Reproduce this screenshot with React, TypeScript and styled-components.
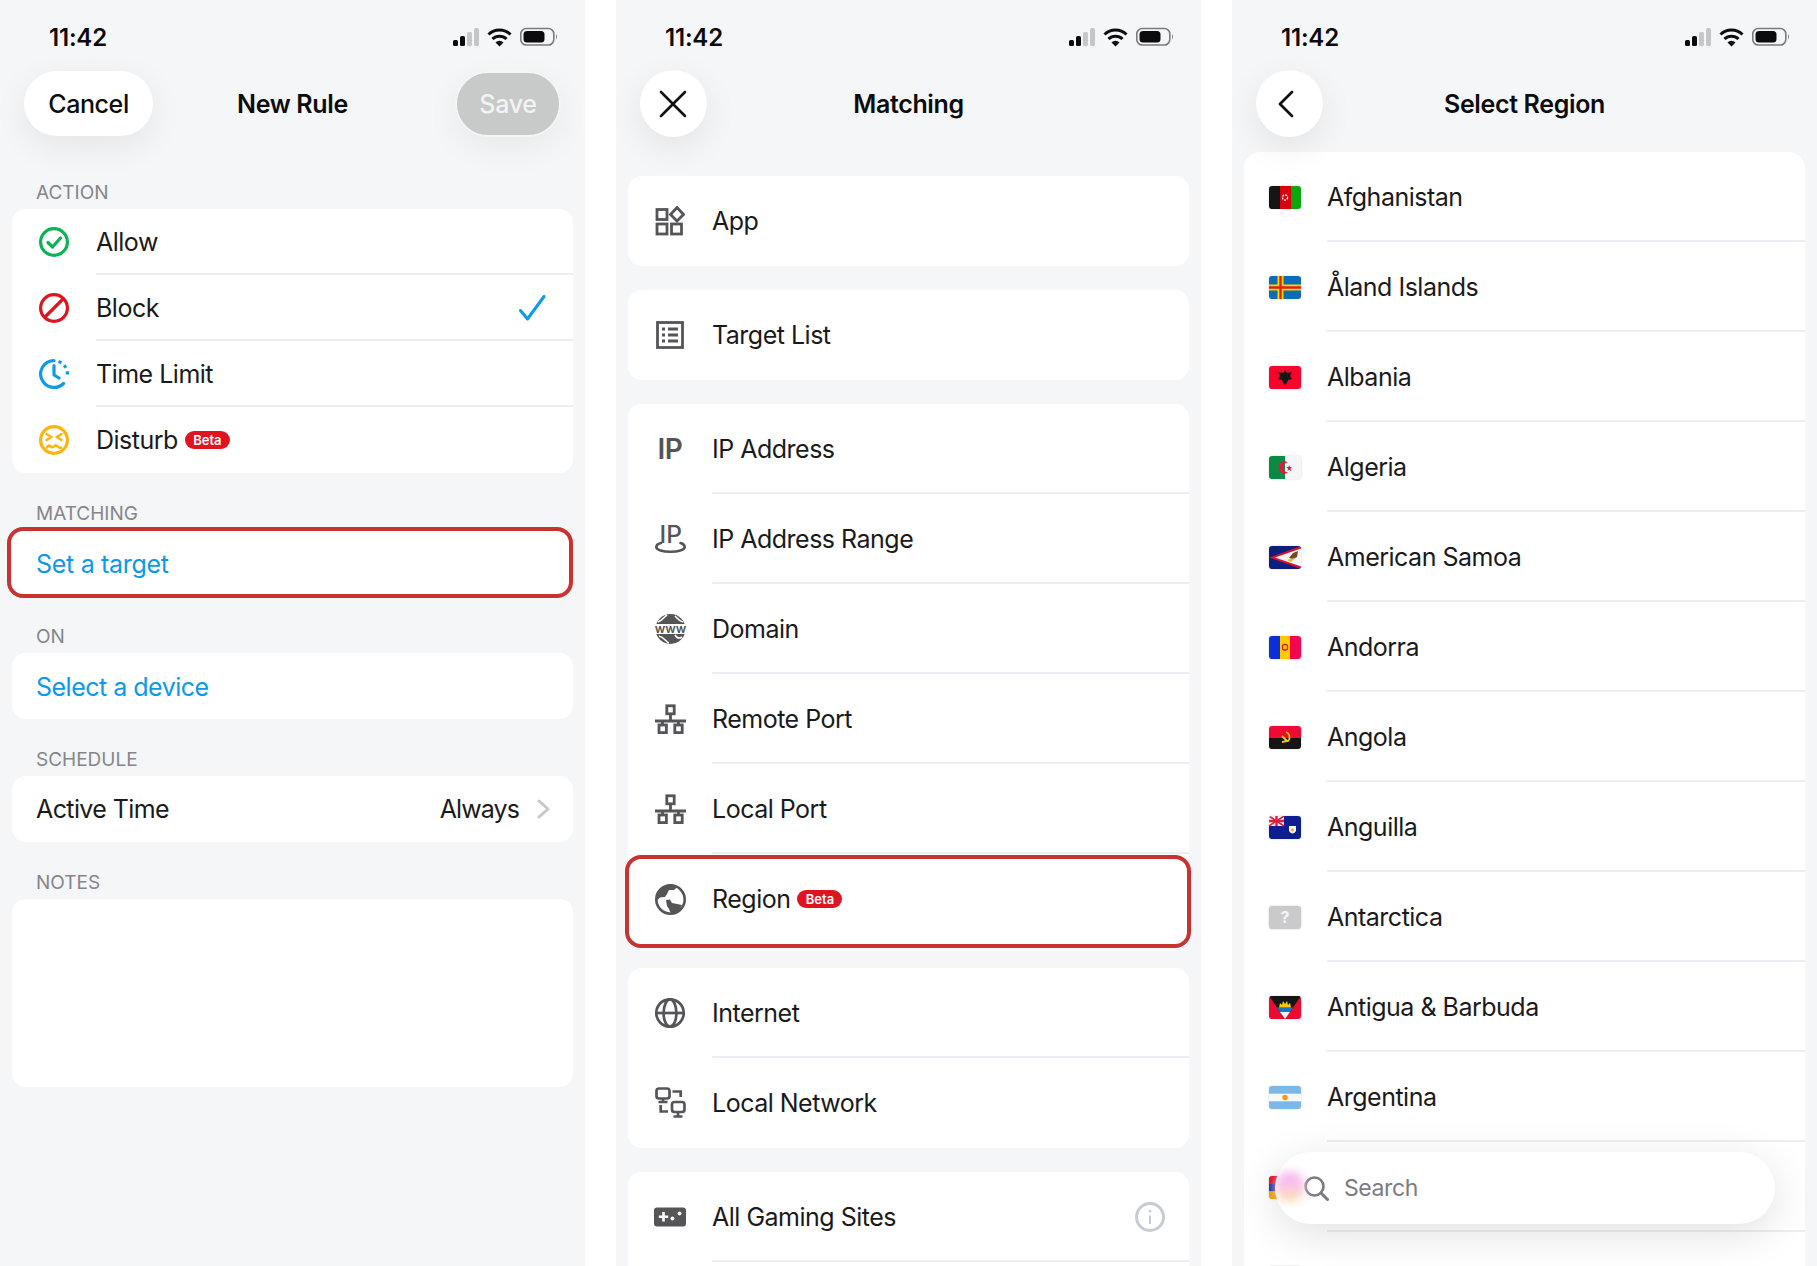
import React from "react";
import styled, { createGlobalStyle } from "styled-components";

const GlobalStyle = createGlobalStyle`
  html, body {
    margin: 0;
    padding: 0;
    background: #ffffff;
  }
  * {
    box-sizing: border-box;
  }
`;

const Page = styled.div`
  display: flex;
  gap: 31px;
  width: 1817px;
  height: 1266px;
  overflow: hidden;
  font-family: Inter, "Liberation Sans", sans-serif;
  color: #1a1a1c;
`;

const Panel = styled.section`
  position: relative;
  flex: 0 0 585px;
  height: 1266px;
  overflow: hidden;
  background: #f5f6f8;
`;

const StatusBar = styled.div`
  display: flex;
  justify-content: space-between;
  align-items: flex-start;
  height: 71px;
  padding: 23px 26px 0 49px;
`;

const Time = styled.span`
  font-size: 24px;
  line-height: 30px;
  font-weight: 600;
  letter-spacing: -0.2px;
  color: #0c0c0e;
`;

const StatusSvg = styled.svg`
  display: block;
  margin-top: 4px;
`;

const NavBar = styled.header`
  position: relative;
  z-index: 1;
  display: grid;
  grid-template-columns: 1fr auto 1fr;
  align-items: start;
  height: 81px;
  padding: 0 24px;
`;

const NavTitle = styled.h1`
  margin: 0;
  font-size: 25px;
  line-height: 66px;
  font-weight: 600;
  letter-spacing: -0.35px;
  color: #0c0c0e;
`;

const CancelButton = styled.button`
  justify-self: start;
  width: 129px;
  height: 65px;
  padding: 0;
  border: none;
  border-radius: 33px;
  background: #ffffff;
  box-shadow: 0 10px 34px rgba(0, 0, 0, 0.07);
  font: 500 25px Inter, sans-serif;
  letter-spacing: -0.4px;
  color: #0c0c0e;
`;

const SaveButton = styled.button`
  justify-self: end;
  width: 106px;
  height: 66px;
  padding: 0;
  border: 2px solid #f4f5f5;
  border-radius: 33px;
  background: #c8c9c9;
  box-shadow: 0 10px 34px rgba(0, 0, 0, 0.06);
  font: 500 25px Inter, sans-serif;
  letter-spacing: -0.3px;
  color: #f2f3f3;
`;

const CircleButton = styled.button<{ $nudge: number }>`
  display: flex;
  align-items: center;
  justify-content: center;
  justify-self: start;
  width: 67px;
  height: 67px;
  margin-top: -1px;
  padding: 0 ${(p) => p.$nudge}px 0 0;
  border: none;
  border-radius: 50%;
  background: #ffffff;
  box-shadow: 0 10px 34px rgba(0, 0, 0, 0.08);
`;

const Section = styled.div`
  padding: 0 12px;
`;

const CardStack = styled.div`
  display: flex;
  flex-direction: column;
  gap: 24px;
  padding: 24px 12px 0;
`;

const SectionLabel = styled.div`
  height: 29px;
  margin-top: 28px;
  padding-left: 24px;
  font-size: 19px;
  line-height: 26px;
  font-weight: 400;
  color: #85858a;
`;

const Card = styled.div<{ $height?: number; $open?: boolean }>`
  position: relative;
  height: ${(p) => (p.$height ? `${p.$height}px` : "auto")};
  border-radius: ${(p) => (p.$open ? "16px 16px 0 0" : "14px")};
  background: #ffffff;
`;

const ListCard = styled(Card)`
  margin: 0 12px;
  overflow: hidden;
`;

const Row = styled.div<{ $height: number }>`
  position: relative;
  display: flex;
  align-items: center;
  height: ${(p) => p.$height}px;
`;

const IconSlot = styled.span<{ $width: number }>`
  display: flex;
  align-items: center;
  justify-content: center;
  flex: 0 0 ${(p) => p.$width}px;
`;

const FlagSlot = styled(IconSlot)`
  padding-right: 1px;
`;

const RowBody = styled.div<{ $last?: boolean }>`
  display: flex;
  flex: 1;
  align-items: center;
  justify-content: space-between;
  align-self: stretch;
  padding: ${(p) => (p.$last ? "0 24px 0 0" : "2px 24px 0 0")};
  border-bottom: ${(p) => (p.$last ? "none" : "2px solid #eceef4")};
`;

const Label = styled.span`
  display: flex;
  align-items: center;
  gap: 7px;
  font-size: 25px;
  font-weight: 400;
  letter-spacing: -0.5px;
`;

const LinkLabel = styled.span<{ $spacing: number }>`
  padding: 1px 0 0 24px;
  font-size: 25px;
  letter-spacing: ${(p) => p.$spacing}px;
  color: #0a9ae9;
`;

const PlainRow = styled(Row)`
  justify-content: space-between;
  padding: 0 23px 0 24px;
  font-size: 25px;
  letter-spacing: -0.6px;
`;

const ValueGroup = styled.span`
  display: flex;
  align-items: center;
  gap: 18px;
  letter-spacing: -0.9px;
`;

const BetaBadge = styled.span`
  display: inline-block;
  width: 45px;
  height: 18px;
  border-radius: 9px;
  background: #de141f;
  color: #ffffff;
  font-size: 13px;
  line-height: 18px;
  font-weight: 600;
  letter-spacing: 0;
  text-align: center;
`;

const TargetHighlight = styled.div`
  position: absolute;
  inset: -3px 0 -2px -5px;
  border: 4px solid #c8322f;
  border-radius: 16px;
  pointer-events: none;
`;

const RegionHighlight = styled.div`
  position: absolute;
  inset: 1px -2px -4px -3px;
  border: 4px solid #c8322f;
  border-radius: 16px;
  pointer-events: none;
`;

const IpGlyph = styled.span`
  font-size: 28px;
  line-height: 30px;
  font-weight: 600;
  letter-spacing: -0.5px;
  color: #555558;
`;

const SearchPill = styled.div`
  position: absolute;
  left: 43px;
  right: 42px;
  bottom: 42px;
  z-index: 2;
  display: flex;
  align-items: center;
  gap: 15px;
  height: 72px;
  padding-left: 29px;
  border-radius: 36px;
  background: #ffffff;
  box-shadow: 0 10px 44px rgba(0, 0, 0, 0.12);

  &::before {
    content: "";
    position: absolute;
    left: 0;
    top: 20px;
    width: 30px;
    height: 30px;
    border-radius: 50%;
    background: linear-gradient(#f5a8ea 0%, #f8c6ef 45%, #fde09a 100%);
    filter: blur(5px);
  }
`;

const SearchText = styled.span`
  position: relative;
  font-size: 23px;
  letter-spacing: -0.4px;
  color: #7b7b81;
`;

const FlagSvg = styled.svg`
  display: block;
  border-radius: 3px;
  box-shadow: 0 0 2px rgba(0, 0, 0, 0.22);
`;

const CheckSvg = styled.svg`
  display: block;
  margin-right: 3px;
`;

const stroke = "#555558";

const StatusIcons = () => (
  <StatusSvg width="106" height="20" viewBox="0 0 106 20">
    <rect x="0" y="13" width="5" height="6" rx="1.5" fill="#0c0c0e" />
    <rect x="7" y="9" width="5" height="10" rx="1.5" fill="#0c0c0e" />
    <rect x="14" y="5" width="5" height="14" rx="1.5" fill="#c6c6c8" />
    <rect x="21" y="1" width="5" height="18" rx="1.5" fill="#c6c6c8" />
    <g fill="none" stroke="#0c0c0e" strokeWidth="3">
      <path d="M35.5 7.5 A15.5 15.5 0 0 1 57.5 7.5" />
      <path d="M39.5 12 A10 10 0 0 1 53.5 12" />
    </g>
    <path d="M46.5 19.5 L42.5 15.5 A5.5 5.5 0 0 1 50.5 15.5 Z" fill="#0c0c0e" />
    <rect x="67.8" y="1.5" width="33" height="16.5" rx="5.5" fill="none" stroke="#7c7c7e" strokeWidth="1.6" />
    <rect x="70.5" y="4" width="21" height="11.5" rx="3.5" fill="#0c0c0e" />
    <path d="M103 7 q2 2.7 0 5.4 z" fill="#7c7c7e" />
  </StatusSvg>
);

const CloseIcon = () => (
  <svg width="28" height="28" viewBox="0 0 28 28" fill="none" stroke="#111" strokeWidth="2.6" strokeLinecap="round">
    <path d="M2 2 L26 26 M26 2 L2 26" />
  </svg>
);

const BackIcon = () => (
  <svg width="18" height="28" viewBox="0 0 18 28" fill="none" stroke="#111" strokeWidth="2.8" strokeLinecap="round" strokeLinejoin="round">
    <path d="M15 2 L3 14 L15 26" />
  </svg>
);

const AllowIcon = () => (
  <svg width="30" height="30" viewBox="0 0 30 30" fill="none" stroke="#0db256" strokeWidth="3.2" strokeLinecap="round" strokeLinejoin="round">
    <circle cx="15" cy="15" r="13.4" />
    <path d="M9 15.5 L13.5 20 L21.5 11" />
  </svg>
);

const BlockIcon = () => (
  <svg width="30" height="30" viewBox="0 0 30 30" fill="none" stroke="#e0131f" strokeWidth="3.2">
    <circle cx="15" cy="15" r="13.4" />
    <path d="M5.5 24.5 L24.5 5.5" />
  </svg>
);

const TimeLimitIcon = () => (
  <svg width="30" height="30" viewBox="0 0 30 30" fill="none" stroke="#0c9be8" strokeWidth="3.2" strokeLinecap="round" strokeLinejoin="round">
    <path d="M15 1.6 A13.4 13.4 0 1 0 24.5 24.5" />
    <path d="M19.5 2.4 A13.4 13.4 0 0 1 27.8 19" strokeDasharray="3.2 3.6" strokeLinecap="butt" />
    <path d="M15 6.5 V16 L20 19" />
  </svg>
);

const DisturbIcon = () => (
  <svg width="30" height="30" viewBox="0 0 30 30" fill="none" stroke="#fcb40f" strokeWidth="3.2" strokeLinecap="round" strokeLinejoin="round">
    <circle cx="15" cy="15" r="13.4" />
    <g strokeWidth="2.5">
      <path d="M7.5 9 L12.5 12 L7.5 15" />
      <path d="M22.5 9 L17.5 12 L22.5 15" />
      <path d="M8 22.5 q1.8 -3 3.5 -1.2 t3.5 0 t3.5 0 t3.5 1.2" />
    </g>
  </svg>
);

const CheckMark = () => (
  <CheckSvg width="27" height="26" viewBox="0 0 27 26" fill="none" stroke="#0c9be8" strokeWidth="3" strokeLinecap="round" strokeLinejoin="round">
    <path d="M1.5 15.5 L8.5 24 L25 1.5" />
  </CheckSvg>
);

const ChevronRight = () => (
  <svg width="13" height="20" viewBox="0 0 13 20" fill="none" stroke="#c8c8cc" strokeWidth="3" strokeLinecap="round" strokeLinejoin="round">
    <path d="M2 2 L11 10 L2 18" />
  </svg>
);

const AppIcon = () => (
  <svg width="30" height="30" viewBox="0 0 30 30" fill="none" stroke={stroke} strokeWidth="2.8">
    <rect x="2" y="3.5" width="10" height="10" />
    <rect x="2" y="18" width="10" height="10" />
    <rect x="16.5" y="18" width="10" height="10" />
    <path d="M22 1.5 L28.5 8.5 L22 15 L15.5 8.5 Z" />
  </svg>
);

const ListIcon = () => (
  <svg width="30" height="30" viewBox="0 0 30 30" fill="none" stroke={stroke} strokeWidth="2.8">
    <rect x="2.5" y="2.5" width="25" height="25" />
    <path d="M7 9 H10 M13 9 H23 M7 15 H10 M13 15 H23 M7 21 H10 M13 21 H23" />
  </svg>
);

const IpRangeIcon = () => (
  <svg width="31" height="30" viewBox="0 0 31 30">
    <text x="4.5" y="19" fontFamily="Inter, sans-serif" fontSize="24.5" fontWeight="500" fill={stroke}>
      IP
    </text>
    <path
      d="M6 19 C2.5 20 1.3 21.5 1.3 23 C1.3 26 8 27.7 15.5 27.7 C23 27.7 29.7 26 29.7 23 C29.7 21 28 19.7 25.5 19"
      fill="none"
      stroke={stroke}
      strokeWidth="2.6"
      strokeLinecap="round"
    />
  </svg>
);

const DomainIcon = () => (
  <svg width="31" height="30" viewBox="0 0 31 30">
    <circle cx="15.5" cy="15" r="15" fill={stroke} />
    <rect x="0" y="10" width="31" height="10" fill="#ffffff" />
    <path d="M3 8 C8 6 9 3 12 1 M28 8 C24 7 22 4 20 2 M4 22 C9 23 11 28 14 29 M20 21 C22 24 24 25 27 23" fill="none" stroke="#ffffff" strokeWidth="1.6" />
    <text x="15.5" y="19" textAnchor="middle" fontFamily="Inter, sans-serif" fontSize="12.5" fontWeight="600" fill={stroke}>
      www
    </text>
  </svg>
);

const PortIcon = () => (
  <svg width="31" height="30" viewBox="0 0 31 30" fill="none" stroke={stroke} strokeWidth="2.8">
    <rect x="11.8" y="1.8" width="7.4" height="8" />
    <path d="M15.5 10 V17 M0 17 H31 M7.5 17 V21 M23.5 17 V21" />
    <rect x="4" y="21" width="7.4" height="7.6" />
    <rect x="19.8" y="21" width="7.4" height="7.6" />
  </svg>
);

const RegionIcon = () => (
  <svg width="31" height="31" viewBox="0 0 31 31">
    <circle cx="15.5" cy="15.5" r="14.2" fill="#ffffff" stroke={stroke} strokeWidth="2.6" />
    <path d="M1.5 17 A14.5 14.5 0 0 1 23 2.5 L19 6 L14 6 L12 10 L10 13 L5 13.5 Z" fill={stroke} />
    <path d="M11 16 L15 15.5 L17 19 L22 20 L27 21 A14 14 0 0 1 16 30 L14 25 L12 22 Z" fill={stroke} />
  </svg>
);

const GlobeIcon = () => (
  <svg width="30" height="30" viewBox="0 0 30 30" fill="none" stroke={stroke} strokeWidth="2.7">
    <circle cx="15" cy="15" r="13.7" />
    <ellipse cx="15" cy="15" rx="6.4" ry="13.7" />
    <path d="M1.3 15 H28.7" />
  </svg>
);

const LocalNetworkIcon = () => (
  <svg width="31" height="32" viewBox="0 0 31 32" fill="none" stroke={stroke} strokeWidth="2.7">
    <rect x="1.5" y="1.5" width="13" height="10" rx="2.5" />
    <path d="M8 11.5 V15 M3.5 15 H12.5" />
    <rect x="17" y="15" width="12.5" height="10" rx="2.5" />
    <path d="M23 25 V29 M18.5 29.5 H27.5" />
    <path d="M17.5 4.5 H25.7 V10" />
    <path d="M5.7 18 V24.5 H13" />
  </svg>
);

const GamingIcon = () => (
  <svg width="32" height="20" viewBox="0 0 32 20">
    <rect x="0" y="0.5" width="32" height="19" rx="3" fill={stroke} />
    <path d="M9.5 5 V14.5 M4.8 9.8 H14.2" stroke="#ffffff" strokeWidth="2.6" />
    <circle cx="18.5" cy="11.5" r="2" fill="#ffffff" />
    <circle cx="25.5" cy="6.5" r="2" fill="#ffffff" />
  </svg>
);

const InfoIcon = () => (
  <svg width="30" height="30" viewBox="0 0 30 30" fill="none" stroke="#c9cbd3" strokeWidth="3">
    <circle cx="15" cy="15" r="13.5" />
    <path d="M15 13.5 V22" strokeWidth="2" />
    <circle cx="15" cy="9.2" r="1.4" fill="#c9cbd3" stroke="none" />
  </svg>
);

const SearchIcon = () => (
  <svg width="25" height="25" viewBox="0 0 25 25" fill="none" stroke="#7b7b81" strokeWidth="2.6" strokeLinecap="round">
    <circle cx="10.5" cy="10.5" r="9" />
    <path d="M17 17 L23.5 23.5" strokeWidth="3" />
  </svg>
);

const flagArt: Record<string, React.ReactNode> = {
  Afghanistan: (
    <>
      <rect width="11" height="23" fill="#151515" />
      <rect x="11" width="11" height="23" fill="#d8000f" />
      <rect x="22" width="10" height="23" fill="#0aa80c" />
      <circle cx="16" cy="11.5" r="2.6" fill="none" stroke="#fff" strokeWidth="1.3" strokeDasharray="2 1" />
    </>
  ),
  "Åland Islands": (
    <>
      <rect width="32" height="23" fill="#0b6db4" />
      <path d="M0 11.5 H32 M11.5 0 V23" stroke="#ffd400" strokeWidth="6" />
      <path d="M0 11.5 H32 M11.5 0 V23" stroke="#da1f26" strokeWidth="2.4" />
    </>
  ),
  Albania: (
    <>
      <rect width="32" height="23" fill="#f7042c" />
      <path d="M16 4 L18 7 L23 6 L21 10 L23 13 L19 14 L17 19 L16 17 L15 19 L13 14 L9 13 L11 10 L9 6 L14 7 Z" fill="#151515" />
    </>
  ),
  Algeria: (
    <>
      <rect width="16" height="23" fill="#0a8a43" />
      <rect x="16" width="16" height="23" fill="#f6f6f6" />
      <path d="M19 6.5 A6 6 0 1 0 19 16.5 A5 5 0 1 1 19 6.5 Z" fill="#e5173f" />
      <path d="M20 9 L21 11 L23 11 L21.5 12.5 L22 15 L20 13.5 L18.5 15 L19 12.5 L17.5 11 L19.5 11 Z" fill="#e5173f" />
    </>
  ),
  "American Samoa": (
    <>
      <rect width="32" height="23" fill="#0d1f7c" />
      <path d="M32 0 L0 11.5 L32 23 Z" fill="#d8102c" />
      <path d="M32 2.5 L6 11.5 L32 20.5 Z" fill="#f6f6f6" />
      <path d="M24 7 L29 5 L28 11 L24 13 L20 12 Z" fill="#7c4420" />
      <path d="M18 14 L26 12 L22 16 Z" fill="#f5b81c" />
    </>
  ),
  Andorra: (
    <>
      <rect width="11" height="23" fill="#0a2fd2" />
      <rect x="11" width="10" height="23" fill="#ffc800" />
      <rect x="21" width="11" height="23" fill="#f2064e" />
      <rect x="13.5" y="8.5" width="5" height="5.5" rx="2" fill="none" stroke="#d8202c" strokeWidth="1.3" />
    </>
  ),
  Angola: (
    <>
      <rect width="32" height="12" fill="#ee0a33" />
      <rect y="12" width="32" height="11" fill="#151515" />
      <path d="M17 6 A5.5 5.5 0 0 1 19 15 L13 16 M13 10 L18 15" fill="none" stroke="#ffc800" strokeWidth="1.8" />
    </>
  ),
  Anguilla: (
    <>
      <rect width="32" height="23" fill="#0d1f90" />
      <rect width="15" height="10" fill="#f4f4f8" />
      <path d="M0 0 L15 10 M15 0 L0 10" stroke="#e0203a" strokeWidth="1.6" />
      <path d="M7.5 0 V10 M0 5 H15" stroke="#e0203a" strokeWidth="2.4" />
      <path d="M20 10 H27 V15 Q23.5 20 20 15 Z" fill="#f6f6f6" />
      <circle cx="23.5" cy="14" r="1.4" fill="#f0a428" />
    </>
  ),
  Antarctica: (
    <>
      <rect width="32" height="23" fill="#cacacd" />
      <text x="16" y="17" textAnchor="middle" fontFamily="Inter, sans-serif" fontSize="16" fontWeight="700" fill="#f4f4f4">
        ?
      </text>
    </>
  ),
  "Antigua & Barbuda": (
    <>
      <rect width="32" height="23" fill="#ec0a30" />
      <path d="M0 0 H32 L16 23 Z" fill="#151515" />
      <path d="M8 11.5 H24 L21 16 H11 Z" fill="#1078c8" />
      <path d="M11 16 H21 L16 23 Z" fill="#f6f6f6" />
      <path d="M10 11.5 L11 7 L13 9 L14 5 L16 8 L18 5 L19 9 L21 7 L22 11.5 Z" fill="#ffc800" />
    </>
  ),
  Argentina: (
    <>
      <rect width="32" height="23" fill="#7bb8e8" />
      <rect y="7.7" width="32" height="7.6" fill="#f8f8f8" />
      <circle cx="16" cy="11.5" r="2.7" fill="#f59a10" />
    </>
  ),
  Armenia: (
    <>
      <rect width="32" height="8" fill="#e2101e" />
      <rect y="8" width="32" height="7.5" fill="#1437a8" />
      <rect y="15.5" width="32" height="7.5" fill="#f5a10a" />
    </>
  ),
  Aruba: <rect width="32" height="23" fill="#7bb8e8" />,
};

const Flag = ({ name }: { name: string }) => (
  <FlagSvg width="32" height="23" viewBox="0 0 32 23">
    {flagArt[name]}
  </FlagSvg>
);

const actions = [
  { label: "Allow", icon: <AllowIcon /> },
  { label: "Block", icon: <BlockIcon />, checked: true },
  { label: "Time Limit", icon: <TimeLimitIcon /> },
  { label: "Disturb", icon: <DisturbIcon />, beta: true },
];

const regions = Object.keys(flagArt);

// the last two rows sit behind the search pill and the page edge, their names never show
const hiddenNames = ["Armenia", "Aruba"];

const NewRulePanel = () => (
  <Panel>
    <StatusBar>
      <Time>11:42</Time>
      <StatusIcons />
    </StatusBar>
    <NavBar>
      <CancelButton>Cancel</CancelButton>
      <NavTitle>New Rule</NavTitle>
      <SaveButton>Save</SaveButton>
    </NavBar>
    <Section>
      <SectionLabel>ACTION</SectionLabel>
      <Card>
        {actions.map((action, i) => (
          <Row key={action.label} $height={66}>
            <IconSlot $width={84}>{action.icon}</IconSlot>
            <RowBody $last={i === actions.length - 1}>
              <Label>
                {action.label}
                {action.beta && <BetaBadge>Beta</BetaBadge>}
              </Label>
              {action.checked && <CheckMark />}
            </RowBody>
          </Row>
        ))}
      </Card>
      <SectionLabel>MATCHING</SectionLabel>
      <Card>
        <Row $height={66}>
          <LinkLabel $spacing={-0.3}>Set a target</LinkLabel>
        </Row>
        <TargetHighlight />
      </Card>
      <SectionLabel>ON</SectionLabel>
      <Card>
        <Row $height={66}>
          <LinkLabel $spacing={-0.5}>Select a device</LinkLabel>
        </Row>
      </Card>
      <SectionLabel>SCHEDULE</SectionLabel>
      <Card>
        <PlainRow $height={66}>
          <span>Active Time</span>
          <ValueGroup>
            Always
            <ChevronRight />
          </ValueGroup>
        </PlainRow>
      </Card>
      <SectionLabel>NOTES</SectionLabel>
      <Card $height={188} />
    </Section>
  </Panel>
);

const MatchRow = ({
  icon,
  label,
  last,
  children,
}: {
  icon?: React.ReactNode;
  label?: React.ReactNode;
  last?: boolean;
  children?: React.ReactNode;
}) => (
  <Row $height={90}>
    <IconSlot $width={84}>{icon}</IconSlot>
    <RowBody $last={last}>
      <Label>{label}</Label>
      {children}
    </RowBody>
  </Row>
);

const MatchingPanel = () => (
  <Panel>
    <StatusBar>
      <Time>11:42</Time>
      <StatusIcons />
    </StatusBar>
    <NavBar>
      <CircleButton $nudge={2}>
        <CloseIcon />
      </CircleButton>
      <NavTitle>Matching</NavTitle>
    </NavBar>
    <CardStack>
      <Card>
        <MatchRow icon={<AppIcon />} label="App" last />
      </Card>
      <Card>
        <MatchRow icon={<ListIcon />} label="Target List" last />
      </Card>
      <Card>
        <MatchRow icon={<IpGlyph>IP</IpGlyph>} label="IP Address" />
        <MatchRow icon={<IpRangeIcon />} label="IP Address Range" />
        <MatchRow icon={<DomainIcon />} label="Domain" />
        <MatchRow icon={<PortIcon />} label="Remote Port" />
        <MatchRow icon={<PortIcon />} label="Local Port" />
        <Row $height={90}>
          <IconSlot $width={84}>
            <RegionIcon />
          </IconSlot>
          <Label>
            Region
            <BetaBadge>Beta</BetaBadge>
          </Label>
          <RegionHighlight />
        </Row>
      </Card>
      <Card>
        <MatchRow icon={<GlobeIcon />} label="Internet" />
        <MatchRow icon={<LocalNetworkIcon />} label="Local Network" last />
      </Card>
      <Card $height={120}>
        <MatchRow icon={<GamingIcon />} label="All Gaming Sites">
          <InfoIcon />
        </MatchRow>
      </Card>
    </CardStack>
  </Panel>
);

const RegionPanel = () => (
  <Panel>
    <StatusBar>
      <Time>11:42</Time>
      <StatusIcons />
    </StatusBar>
    <NavBar>
      <CircleButton $nudge={7}>
        <BackIcon />
      </CircleButton>
      <NavTitle>Select Region</NavTitle>
    </NavBar>
    <ListCard $open>
      {regions.map((name) => (
        <Row key={name} $height={90}>
          <FlagSlot $width={83}>
            <Flag name={name} />
          </FlagSlot>
          <RowBody>
            {!hiddenNames.includes(name) && <Label>{name}</Label>}
          </RowBody>
        </Row>
      ))}
    </ListCard>
    <SearchPill>
      <SearchIcon />
      <SearchText>Search</SearchText>
    </SearchPill>
  </Panel>
);

export default function App(): React.ReactElement {
  return (
    <Page>
      <GlobalStyle />
      <NewRulePanel />
      <MatchingPanel />
      <RegionPanel />
    </Page>
  );
}
